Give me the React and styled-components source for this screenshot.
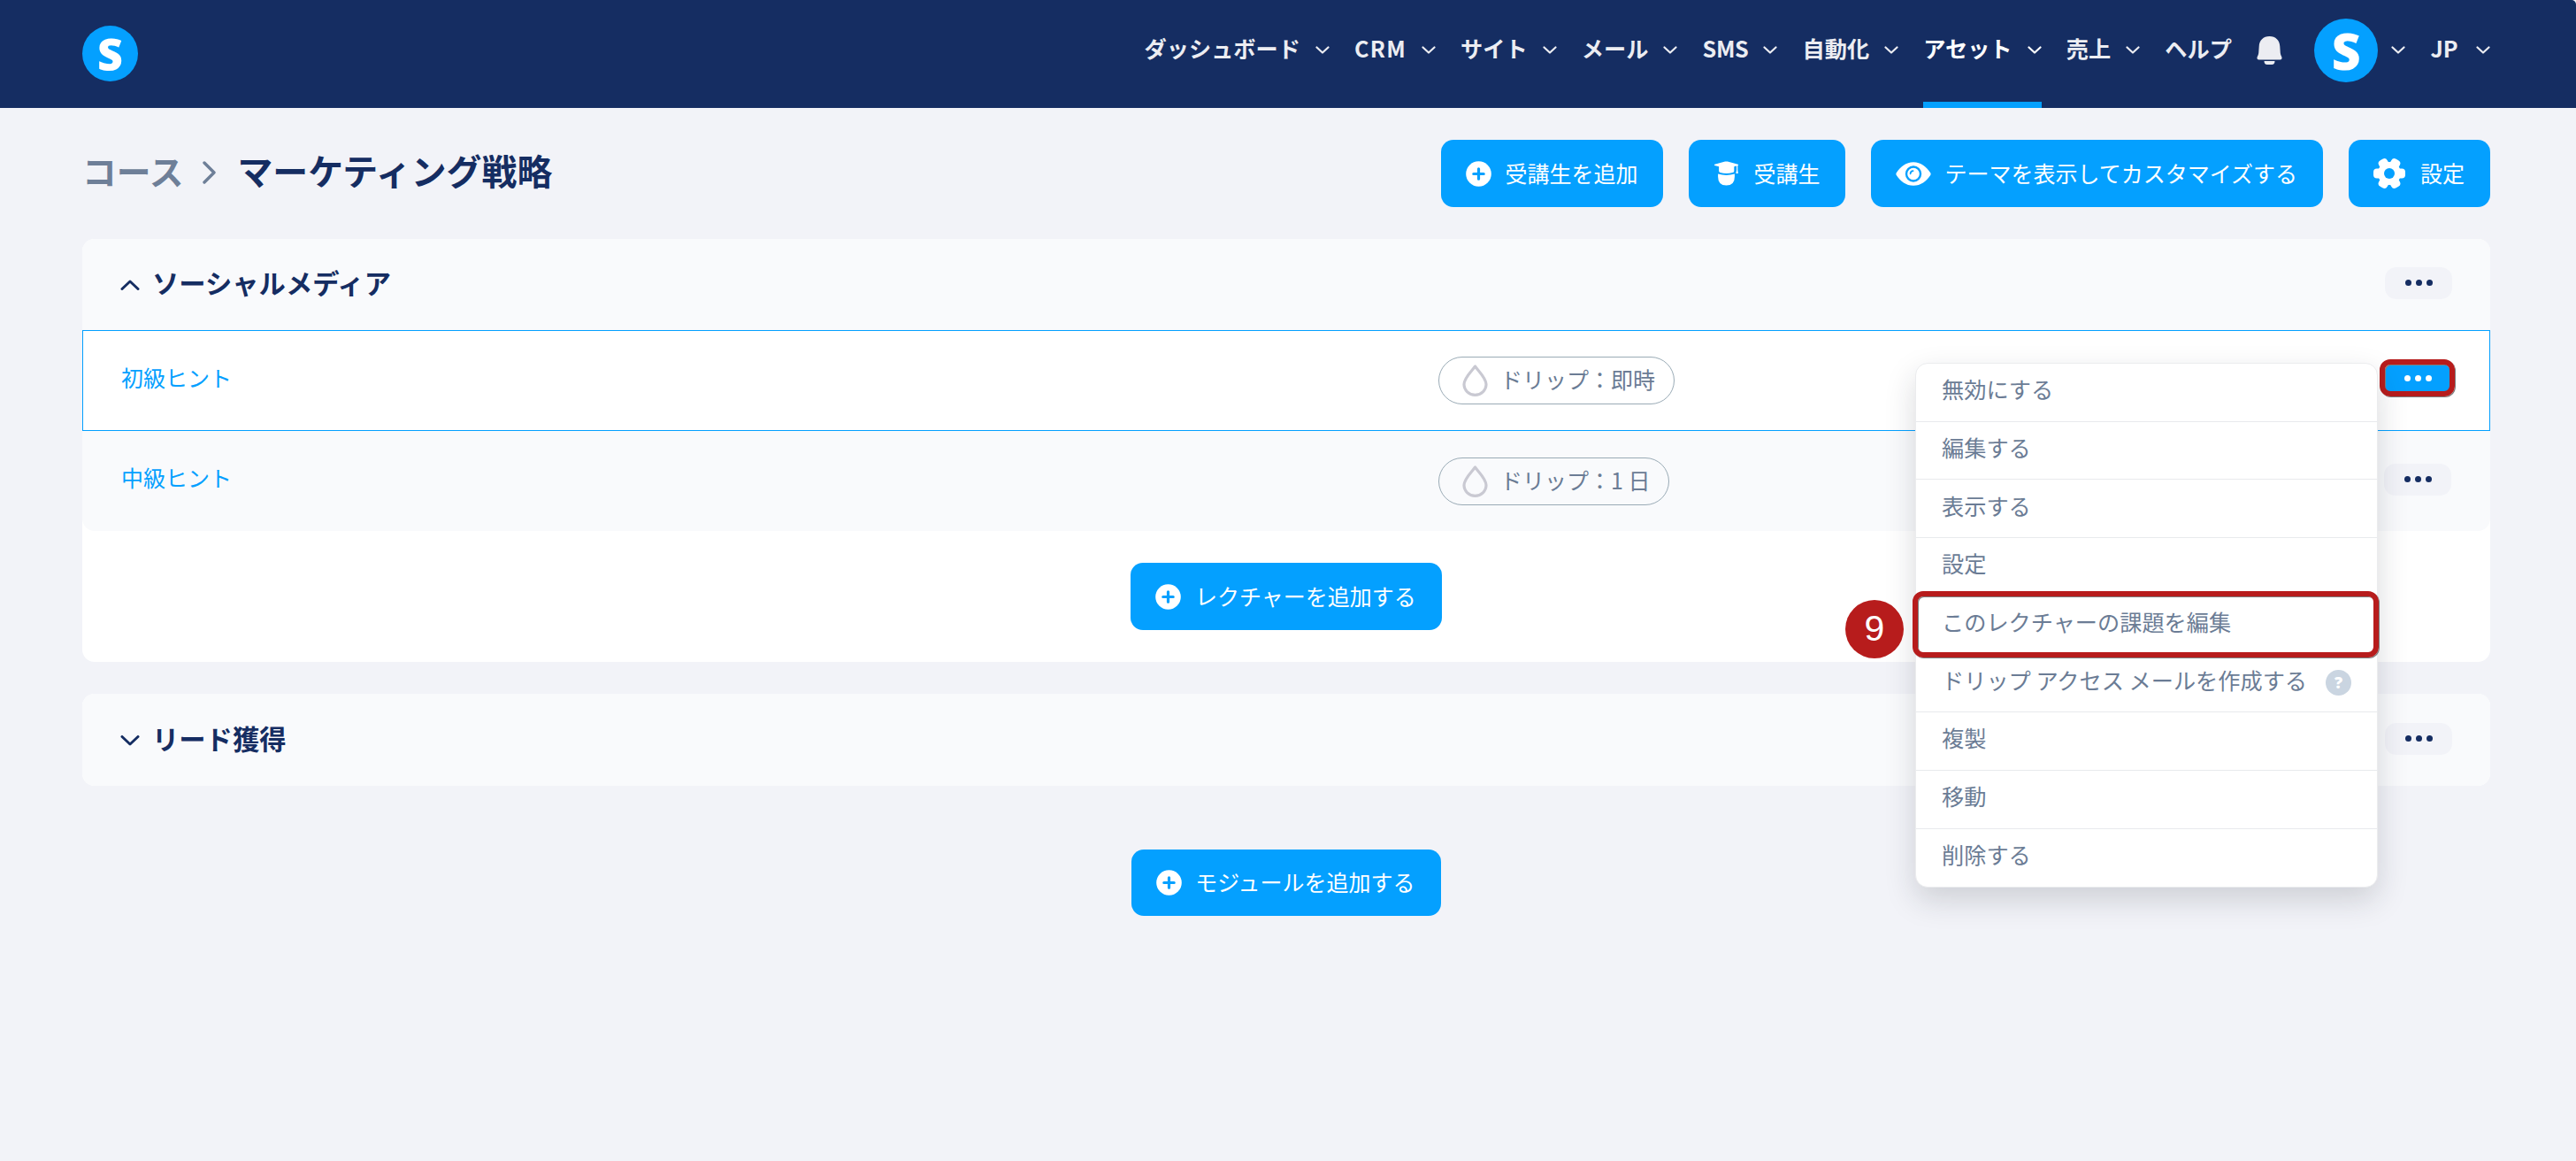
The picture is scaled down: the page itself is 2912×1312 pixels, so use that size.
import React from "react"
import styled, { createGlobalStyle } from "styled-components"

const GlobalStyle = createGlobalStyle`
  * {
    box-sizing: border-box;
  }
  body {
    margin: 0;
    background: #f2f3f8;
    font-family: "Noto Sans CJK JP", sans-serif;
    font-size: 25px;
    line-height: 36px;
    color: #152d62;
  }
`

const Page = styled.div`
  min-height: 1312px;
`

const Header = styled.header`
  height: 122px;
  padding: 0 97px 0 93px;
  display: flex;
  align-items: stretch;
  justify-content: space-between;
  background: #152d62;
  border-top-right-radius: 5px;
`

const Logo = styled.div`
  width: ${props => props.size}px;
  height: ${props => props.size}px;
  margin-top: ${props => props.top}px;
  border-radius: 50%;
  display: flex;
  align-items: center;
  justify-content: center;
  background: #04a0ff;
  color: white;
  font-family: "Open Sans", sans-serif;
  font-size: ${props => props.font}px;
  line-height: 1;
  font-weight: 800;
`

const Nav = styled.nav`
  display: flex;
  gap: 28.2px;
`

const NavItem = styled.div`
  display: flex;
  align-items: center;
  gap: ${props => props.gap || 17}px;
  padding-bottom: 14px;
  font-size: 25.2px;
  font-weight: 700;
  letter-spacing: ${props => props.spacing || 0}px;
  color: ${props => (props.active ? "white" : "#ecedf2")};
  box-shadow: ${props => (props.active ? "inset 0 -7px #04a0ff" : "none")};
  svg {
    margin-top: 5px;
  }
`

const Bell = styled.svg`
  width: 29px;
  height: 32px;
  margin-top: 41px;
`

const Account = styled.div`
  display: flex;
  gap: 15px;
  margin-left: 8px;
  color: #ecedf2;
  > svg {
    margin-top: 52px;
  }
`

const Main = styled.main`
  padding: 36px 97px 0 93px;
`

const TitleBar = styled.div`
  display: flex;
  align-items: center;
  justify-content: space-between;
  height: 76px;
  margin-bottom: 36px;
`

const Breadcrumb = styled.h1`
  display: flex;
  align-items: center;
  margin: 0 0 9px;
  font-size: 39.9px;
  line-height: 56px;
  font-weight: 700;
  svg {
    margin: 7px 24px 0 22px;
  }
`

const Crumb = styled.span`
  color: #6e7f98;
  font-size: 38.8px;
`

const Buttons = styled.div`
  display: flex;
  gap: 29px;
`

const Button = styled.button`
  display: flex;
  align-items: center;
  gap: ${props => props.gap || 15}px;
  height: ${props => props.height || 76}px;
  padding: 0 29px 0 28px;
  border: 0;
  border-radius: 14px;
  background: #04a0ff;
  color: white;
  font: inherit;
  white-space: nowrap;
  span {
    margin-bottom: 3px;
  }
`

const Card = styled.section`
  margin-bottom: 36px;
  border-radius: 14px;
  background: white;
`

const CardHeader = styled.div`
  display: flex;
  align-items: center;
  justify-content: space-between;
  height: ${props => props.height}px;
  padding: 0 43px 3px;
  border-radius: ${props => (props.collapsed ? "14px" : "14px 14px 0 0")};
  background: #f9fafc;
`

const CardTitle = styled.h2`
  display: flex;
  align-items: center;
  gap: 14px;
  margin: 0 0 2px;
  font-size: 30.3px;
  line-height: 44px;
  font-weight: 700;
  svg {
    margin-top: 6px;
  }
`

const Row = styled.div`
  display: grid;
  grid-template-columns: 1489px 1fr auto;
  align-items: center;
  height: ${props => (props.active ? 114 : 113)}px;
  padding: 0 43px;
  border: 1px solid ${props => (props.active ? "#04a0ff" : "transparent")};
  border-radius: ${props => (props.active ? "0" : "0 0 14px 14px")};
  background: ${props => (props.active ? "white" : "#f9fafc")};
`

const Lecture = styled.a`
  margin-bottom: 9px;
  color: #04a0ff;
`

const Pill = styled.div`
  justify-self: start;
  display: flex;
  align-items: center;
  gap: 14px;
  height: 54px;
  padding: 0 21px 0 26px;
  border: 1px solid #9aabb6;
  border-radius: 27px;
  color: #6b7c95;
  span {
    margin-bottom: 4px;
  }
`

const Actions = styled.div`
  position: relative;
  margin-bottom: 4px;
`

const More = styled.button`
  display: flex;
  align-items: center;
  justify-content: center;
  gap: 5px;
  width: 76px;
  height: 36px;
  padding: 0 0 1px;
  border: 0;
  border-radius: 13px;
  background: ${props => (props.active ? "#04a0ff" : "#f2f3f8")};
  i {
    width: 7px;
    height: 7px;
    border-radius: 50%;
    background: ${props => (props.active ? "white" : "#152d62")};
  }
`

const Highlight = styled.div`
  position: absolute;
  inset: ${props => props.inset};
  border: 6px solid #b71c1c;
  border-radius: 12px;
  box-shadow: 1px 1px 0 #7d7f80, inset 1px 1px 0 #7d7f80;
  pointer-events: none;
`

const Menu = styled.ul`
  position: absolute;
  z-index: 1;
  top: 0;
  right: 83px;
  width: 523px;
  margin: 0;
  padding: 0;
  list-style: none;
  border: 1px solid #ebecee;
  border-radius: 14px;
  background: white;
  color: #6b7c95;
  font-size: 25.2px;
  box-shadow: 0 14px 34px rgba(30, 35, 50, 0.17);
`

const MenuItem = styled.li`
  position: relative;
  display: flex;
  align-items: center;
  justify-content: space-between;
  height: 65.7px;
  padding: 0 29px 8px;
  white-space: nowrap;
  border-bottom: 1px solid #e8eaed;
  &:last-child {
    border-bottom: 0;
  }
`

const Help = styled.span`
  width: 29px;
  height: 29px;
  margin-top: 7px;
  border-radius: 50%;
  background: #cad5e1;
  color: white;
  font: 800 18px/29px "Open Sans", sans-serif;
  text-align: center;
`

const Step = styled.div`
  position: absolute;
  left: -80px;
  top: 4px;
  width: 66px;
  height: 66px;
  border-radius: 50%;
  background: #b71c1c;
  color: white;
  font: 41px/65px "Liberation Sans", sans-serif;
  text-align: center;
`

const Footer = styled.div`
  display: flex;
  justify-content: center;
  padding: 36px 0;
`

const Chevron = ({ width = 16, height = 9, stroke = 2.2, d = "M1.5 1.5 L8 7.5 L14.5 1.5" }) => (
  <svg width={width} height={height} viewBox={`0 0 ${width} ${height}`} fill="none">
    <path d={d} stroke="currentColor" strokeWidth={stroke} strokeLinecap="round" strokeLinejoin="round" />
  </svg>
)

const PlusIcon = () => (
  <svg width="29" height="29" viewBox="0 0 29 29">
    <circle cx="14.5" cy="14.5" r="14.3" fill="white" />
    <path d="M14.5 8.8v11.4M8.8 14.5h11.4" stroke="#04a0ff" strokeWidth="3.2" strokeLinecap="round" />
  </svg>
)

const StudentIcon = () => (
  <svg width="29" height="28" viewBox="0 0 28 28" fill="white">
    <path d="M.8 3.8 12.6.6q1.4-.4 2.8 0L27.2 3.8q1 .6 0 1.1L22.8 6.3v5q0 1.400-1.600 1.800-7 1.800-14.200 0-1.400-.5-1.400-1.800v-5L.8 4.900q-1-.5 0-1.100z" />
    <path d="M4.600 14.600q9.400 2.600 18.800 0v3.200q0 9.800-9.400 9.800t-9.400-9.800z" />
    <path d="M25.600 5h1.200v5.200l.6 3.800h-2.600l.8-3.800z" />
  </svg>
)

const EyeIcon = () => (
  <svg width="40" height="27" viewBox="0 0 40 27">
    <path d="M20 .3C28.500.3 34.600 5.500 39.200 12.200q.9 1.400 0 2.700C34.600 21.600 28.500 26.700 20 26.700S5.400 21.600.8 14.900q-.9-1.300 0-2.700C5.400 5.500 11.500.3 20 .3z" fill="white" />
    <circle cx="20" cy="13.500" r="8" fill="white" stroke="#04a0ff" strokeWidth="2.400" />
    <path d="M16.600 13.300q0-3 3-3.200" fill="none" stroke="#04a0ff" strokeWidth="1.700" strokeLinecap="round" />
  </svg>
)

const teeth = [0, 60, 120]

const GearIcon = () => (
  <svg width="36" height="36" viewBox="-18 -18 36 36">
    <circle r="13" fill="white" />
    {teeth.map(angle => (
      <rect key={angle} x="-18" y="-5.500" width="36" height="11" rx="4" fill="white" transform={`rotate(${angle})`} />
    ))}
    <circle r="6" fill="#04a0ff" />
  </svg>
)

const DropIcon = () => (
  <svg width="29" height="36" viewBox="0 0 29 36" fill="none">
    <path d="M14.500 2C11 7 2 15 2 22.300a12.500 12 0 0 0 25 0C27 15 18 7 14.500 2z" stroke="#c9c9d2" strokeWidth="3.200" strokeLinejoin="round" />
  </svg>
)

const BellIcon = () => (
  <Bell viewBox="0 0 29 32" fill="#ecedf2">
    <path d="M14.500 0C21.500 0 26 4.500 26.300 11.500L26.800 19q.2 2 1.500 4.300.9 3.200-1.700 3.200H2.400Q-.2 26.500.7 23.300 2 21 2.200 19l.5-7.500C3 4.500 7.500 0 14.500 0z" />
    <path d="M8.500 28h12q0 4-3.500 4h-5q-3.500 0-3.500-4z" />
  </Bell>
)

const MoreButton = ({ active }) => (
  <More active={active ? 1 : undefined}>
    <i />
    <i />
    <i />
  </More>
)

const nav = [
  { label: "ダッシュボード" },
  { label: "CRM", spacing: 1.2 },
  { label: "サイト" },
  { label: "メール" },
  { label: "SMS", spacing: -0.4 },
  { label: "自動化" },
  { label: "アセット", active: true },
  { label: "売上" },
]

const menu = [
  "無効にする",
  "編集する",
  "表示する",
  "設定",
  "このレクチャーの課題を編集",
  "ドリップ アクセス メールを作成する",
  "複製",
  "移動",
  "削除する",
]

const App = () => {
  return (
    <Page>
      <GlobalStyle />
      <Header>
        <Logo size={63} top={29} font={50}>S</Logo>
        <Nav>
          {nav.map(item => (
            <NavItem key={item.label} active={item.active ? 1 : undefined} spacing={item.spacing}>
              {item.label}
              <Chevron />
            </NavItem>
          ))}
          <NavItem>ヘルプ</NavItem>
          <BellIcon />
          <Account>
            <Logo size={72} top={21} font={57}>S</Logo>
            <Chevron />
          </Account>
          <NavItem gap={20.5}>
            JP
            <Chevron />
          </NavItem>
        </Nav>
      </Header>
      <Main>
        <TitleBar>
          <Breadcrumb>
            <Crumb>コース</Crumb>
            <Crumb as="svg" width="15" height="26" viewBox="0 0 15 26" fill="none">
              <path d="M2 2 L13 13 L2 24" stroke="currentColor" strokeWidth="3.4" strokeLinecap="round" strokeLinejoin="round" />
            </Crumb>
            マーケティング戦略
          </Breadcrumb>
          <Buttons>
            <Button>
              <PlusIcon />
              <span>受講生を追加</span>
            </Button>
            <Button gap={16}>
              <StudentIcon />
              <span>受講生</span>
            </Button>
            <Button>
              <EyeIcon />
              <span>テーマを表示してカスタマイズする</span>
            </Button>
            <Button gap={17}>
              <GearIcon />
              <span>設定</span>
            </Button>
          </Buttons>
        </TitleBar>
        <Card>
          <CardHeader height={103}>
            <CardTitle>
              <Chevron width={22} height={12} stroke={3} d="M2 10.500 L11 2 L20 10.500" />
              ソーシャルメディア
            </CardTitle>
            <MoreButton />
          </CardHeader>
          <Row active={1}>
            <Lecture>初級ヒント</Lecture>
            <Pill>
              <DropIcon />
              <span>ドリップ：即時</span>
            </Pill>
            <Actions>
              <MoreButton active />
              <Highlight inset="-4px -4px -2px -5px" />
              <Menu>
                {menu.map((label, index) => (
                  <MenuItem key={label}>
                    {label}
                    {index === 5 && <Help>?</Help>}
                    {index === 4 && (
                      <>
                        <Highlight inset="-6px -2px -5px -4px" />
                        <Step>9</Step>
                      </>
                    )}
                  </MenuItem>
                ))}
              </Menu>
            </Actions>
          </Row>
          <Row>
            <Lecture>中級ヒント</Lecture>
            <Pill>
              <DropIcon />
              <span>ドリップ：1 日</span>
            </Pill>
            <Actions>
              <MoreButton />
            </Actions>
          </Row>
          <Footer>
            <Button gap={16}>
              <PlusIcon />
              <span>レクチャーを追加する</span>
            </Button>
          </Footer>
        </Card>
        <Card>
          <CardHeader height={104} collapsed={1}>
            <CardTitle>
              <Chevron width={22} height={12} stroke={3} d="M2 1.500 L11 10 L20 1.500" />
              リード獲得
            </CardTitle>
            <MoreButton />
          </CardHeader>
        </Card>
        <Footer>
          <Button height={75}>
            <PlusIcon />
            <span>モジュールを追加する</span>
          </Button>
        </Footer>
      </Main>
    </Page>
  )
}

export default App
